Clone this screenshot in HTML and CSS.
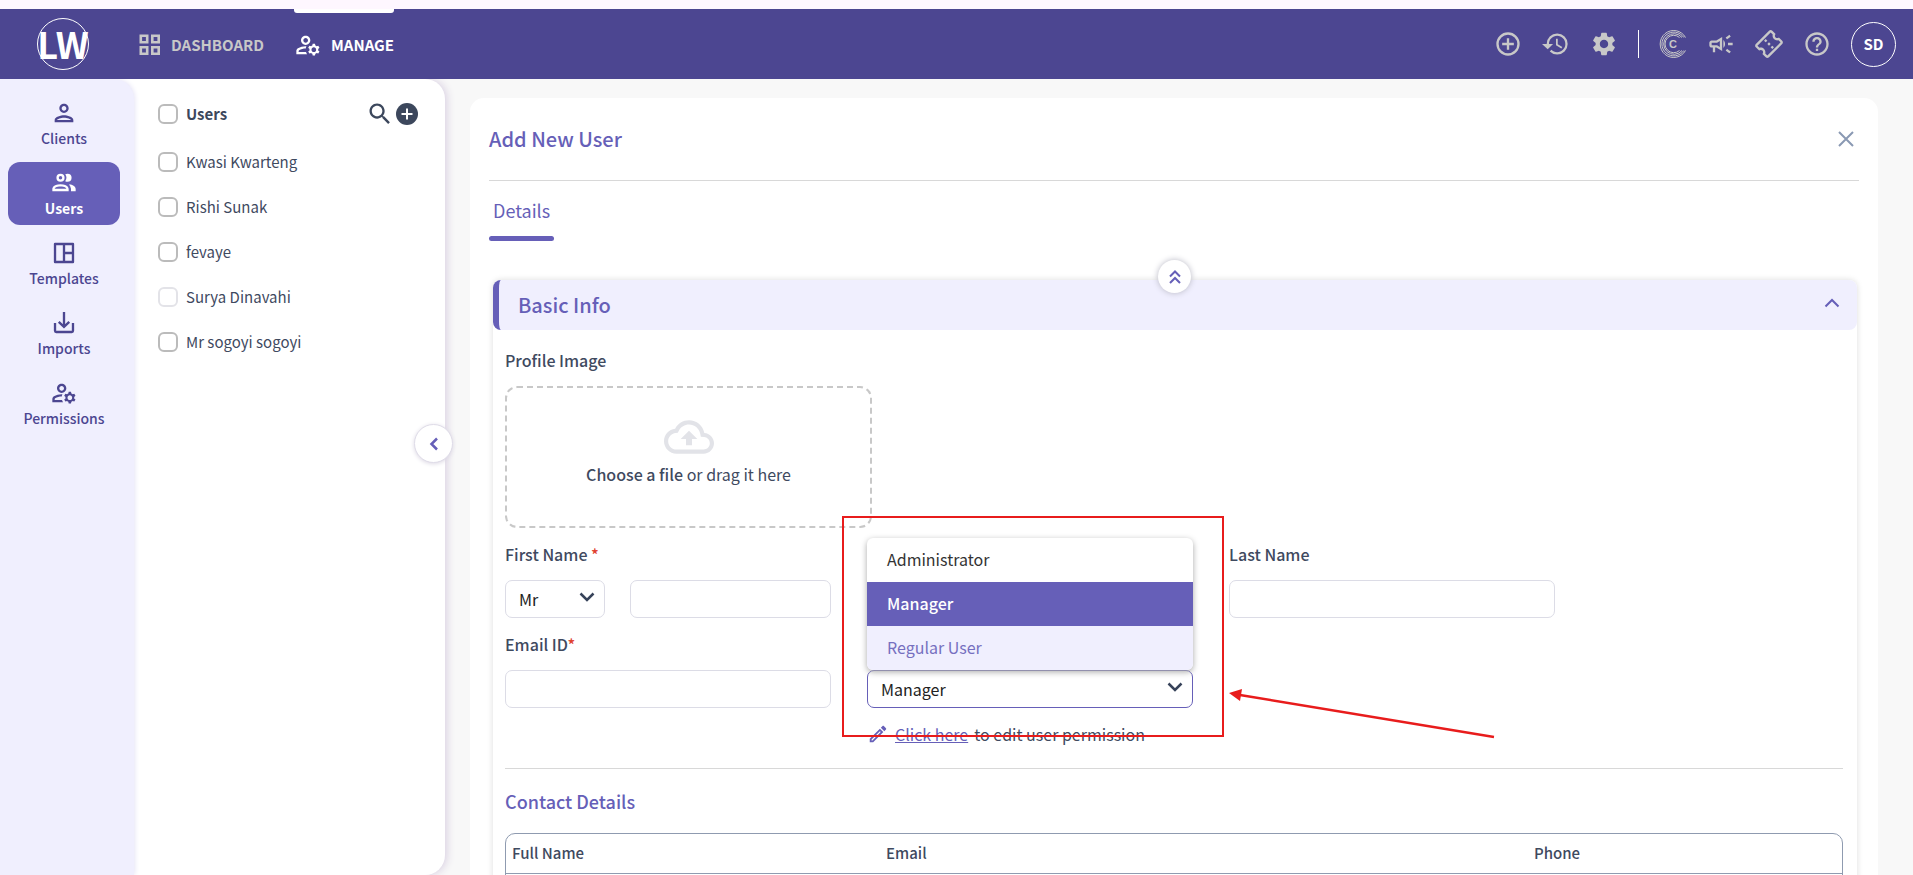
FILE: index.html
```html
<!DOCTYPE html>
<html lang="en">

<head>
  <meta charset="UTF-8">
  <meta name="viewport" content="width=device-width, initial-scale=1.0">
  <title>Add New User</title>
  <link rel="stylesheet" href="styles.css">
</head>

<body>
  <header class="topbar">
    <a class="logo" href="#">LW</a>
    <nav class="main-nav">
      <a href="#">
        <svg class="ico-24" viewBox="0 0 24 24" fill="none" stroke="currentColor" stroke-width="2.6"><path d="M2.8 2.8h6.4v6.4H2.8zM14.3 2.8h6.4v6.4h-6.4zM2.8 14.3h6.4v6.4H2.8zM14.3 14.3h6.4v6.4h-6.4z"/></svg>
        DASHBOARD
      </a>
      <a href="#" class="active">
        <svg class="ico-28" viewBox="0 0 24 24"><use href="#i-manage"/></svg>
        MANAGE
      </a>
    </nav>
    <div class="tools">
      <button type="button" aria-label="Add"><svg class="ico-28" viewBox="0 0 24 24" fill="none" stroke="currentColor" stroke-width="2"><circle cx="12" cy="12" r="9"/><path d="M12 7v10M7 12h10"/></svg></button>
      <button type="button" aria-label="History"><svg class="ico-28" viewBox="0 0 24 24"><path d="M13 3a9 9 0 0 0-9 9H0l4.9 4.4L9.5 12H6c0-3.87 3.13-7 7-7s7 3.13 7 7-3.13 7-7 7c-1.93 0-3.68-.79-4.94-2.06l-1.42 1.42A8.95 8.95 0 0 0 13 21a9 9 0 0 0 0-18zm-1 4.500v5.500l4.600 2.800.8-1.300-3.900-2.300V7.500H12z"/></svg></button>
      <button type="button" aria-label="Settings"><svg class="ico-28" viewBox="0 0 24 24"><path d="M19.140 12.940c.04-.3.06-.61.06-.94 0-.32-.02-.64-.07-.94l2.030-1.580c.18-.14.23-.41.12-.61l-1.920-3.320c-.12-.22-.37-.29-.59-.22l-2.390.96c-.5-.38-1.030-.7-1.620-.94L14.400 2.810c-.04-.24-.24-.41-.48-.41h-3.840c-.24 0-.43.17-.47.41L9.250 5.350c-.59.24-1.130.57-1.620.94L5.240 5.330c-.22-.08-.47 0-.59.22L2.740 8.870c-.12.21-.08.47.12.61l2.030 1.580c-.05.3-.09.63-.09.94s.02.64.07.94l-2.030 1.580c-.18.14-.23.41-.12.61l1.920 3.320c.12.22.37.29.59.22l2.390-.96c.5.38 1.030.7 1.620.94l.36 2.540c.05.24.24.41.48.41h3.840c.24 0 .44-.17.47-.41l.36-2.540c.59-.24 1.130-.56 1.620-.94l2.390.96c.22.08.47 0 .59-.22l1.920-3.320c.12-.22.07-.47-.12-.61l-2.010-1.580zM12 15.600c-1.980 0-3.600-1.620-3.600-3.600s1.620-3.600 3.600-3.600 3.600 1.620 3.600 3.600-1.620 3.600-3.600 3.600z"/></svg></button>
      <span class="divider"></span>
      <button type="button" aria-label="Credits">
        <svg class="ico-28" viewBox="0 0 28 28" fill="none" stroke="currentColor" stroke-width="1">
          <path d="M26.500 7.500A13.500 13.500 0 1 0 26.500 20.500"/><path d="M24.800 7.500A11.900 11.900 0 1 0 24.800 20.500"/><path d="M23 7.500A10.300 10.300 0 1 0 23 20.500"/><path d="M20.500 7.500A8.700 8.700 0 1 0 20.500 20.500"/>
          <text x="14" y="18" text-anchor="middle">C</text>
        </svg>
      </button>
      <button type="button" aria-label="Announcements"><svg class="ico-28" viewBox="0 0 24 24"><path d="M18 11v2h4v-2h-4zM16 17.610c.96.71 2.210 1.650 3.200 2.390.4-.53.8-1.070 1.200-1.600-.99-.74-2.240-1.680-3.200-2.400-.4.54-.8 1.080-1.200 1.610zM20.400 5.600c-.4-.53-.8-1.070-1.200-1.600-.99.74-2.240 1.680-3.200 2.400.4.53.8 1.070 1.200 1.600.96-.72 2.210-1.650 3.200-2.400zM4 9c-1.100 0-2 .9-2 2v2c0 1.100.9 2 2 2h1v4h2v-4h1l5 3V6L8 9H4zm5.030 1.710L11 9.530v4.940l-1.970-1.180-.48-.29H4v-2h4.550l.48-.29zM15.500 12c0-1.330-.58-2.530-1.500-3.350v6.690c.92-.81 1.500-2.010 1.500-3.340z"/></svg></button>
      <button type="button" aria-label="Tickets"><svg class="ico-28" viewBox="0 0 24 24" overflow="visible"><path transform="rotate(-45 12 12)" d="M22 10V6c0-1.110-.9-2-2-2H4c-1.100 0-1.990.89-1.990 2v4c1.100 0 1.990.9 1.990 2s-.89 2-2 2v4c0 1.100.9 2 2 2h16c1.100 0 2-.9 2-2v-4c-1.100 0-2-.9-2-2s.9-2 2-2zm-2-1.460c-1.190.69-2 1.990-2 3.460s.81 2.770 2 3.460V18H4v-2.540c1.190-.69 2-1.990 2-3.460 0-1.480-.8-2.770-1.990-3.460L4 6h16v2.540zM11 15h2v2h-2zm0-4h2v2h-2zm0-4h2v2h-2z"/></svg></button>
      <button type="button" aria-label="Help"><svg class="ico-28" viewBox="0 0 24 24"><path d="M11 18h2v-2h-2v2zm1-16C6.480 2 2 6.480 2 12s4.480 10 10 10 10-4.480 10-10S17.520 2 12 2zm0 18c-4.410 0-8-3.590-8-8s3.590-8 8-8 8 3.590 8 8-3.590 8-8 8zm0-14c-2.210 0-4 1.790-4 4h2c0-1.100.9-2 2-2s2 .9 2 2c0 2-3 1.750-3 5h2c0-2.250 3-2.500 3-5 0-2.210-1.790-4-4-4z"/></svg></button>
      <button type="button" class="avatar">SD</button>
    </div>
  </header>

  <div class="layout">
    <nav class="sidebar">
      <a href="#">
        <svg class="ico-28" viewBox="0 0 24 24"><path d="M12 6c1.100 0 2 .9 2 2s-.9 2-2 2-2-.9-2-2 .9-2 2-2m0 10c2.700 0 5.800 1.290 6 2H6c.23-.72 3.310-2 6-2m0-12C9.790 4 8 5.790 8 8s1.790 4 4 4 4-1.790 4-4-1.790-4-4-4zm0 10c-2.670 0-8 1.340-8 4v2h16v-2c0-2.660-5.330-4-8-4z"/></svg>
        Clients
      </a>
      <a href="#" class="active">
        <svg class="ico-28" viewBox="0 0 24 24"><path d="M13.070 10.410A5 5 0 0 0 13.070 4.590A3.390 3.390 0 0 1 15 4A3.500 3.500 0 0 1 15 11A3.390 3.390 0 0 1 13.070 10.410M5.500 7.500A3.500 3.500 0 1 1 9 11A3.500 3.500 0 0 1 5.500 7.500M7.500 7.500A1.500 1.500 0 1 0 9 6A1.500 1.500 0 0 0 7.500 7.500M16 17V19H2V17S2 13 9 13 16 17 16 17M14 17C13.860 16.220 12.670 15 9 15S4.070 16.310 4 17M15.950 13A5.320 5.320 0 0 1 18 17V19H22V17S22 13.370 15.940 13Z"/></svg>
        Users
      </a>
      <a href="#">
        <svg class="ico-28" viewBox="0 0 24 24" fill="none" stroke="currentColor" stroke-width="2" stroke-linejoin="round"><path d="M4.300 4.300h15.400v15.400H4.300zM12 4.300v15.400M12 12h7.700"/></svg>
        Templates
      </a>
      <a href="#">
        <svg class="ico-28" viewBox="0 0 24 24" fill="none" stroke="currentColor" stroke-width="2"><path d="M4.300 12v6.700q0 1 1 1h13.400q1 0 1-1V12M12 2.500v12M7.500 11l4.500 4.300 4.500-4.300"/></svg>
        Imports
      </a>
      <a href="#">
        <svg class="ico-28" viewBox="0 0 24 24">
          <path id="i-manage" d="M4 18v-.65c0-.34.16-.66.41-.81C6.100 15.530 8.030 15 10 15c.03 0 .05 0 .08.01.1-.7.3-1.370.59-1.980-.22-.02-.44-.03-.67-.03-2.420 0-4.680.67-6.610 1.820-.88.52-1.390 1.500-1.390 2.530V20h9.260c-.42-.6-.75-1.280-.97-2H4zm6-6c2.210 0 4-1.790 4-4s-1.790-4-4-4C7.790 4 6 5.790 6 8s1.790 4 4 4zm0-6c1.100 0 2 .9 2 2s-.9 2-2 2-2-.9-2-2 .9-2 2-2zm10.750 10c0-.22-.03-.42-.06-.63l1.140-1.010-1-1.730-1.450.49c-.32-.27-.68-.48-1.080-.63L18 11h-2l-.3 1.490c-.4.15-.76.36-1.080.63l-1.450-.49-1 1.730 1.140 1.010c-.03.21-.06.41-.06.63s.03.42.06.63l-1.140 1.010 1 1.730 1.450-.49c.32.27.68.48 1.080.63L16 21h2l.3-1.490c.4-.15.76-.36 1.080-.63l1.450.49 1-1.730-1.140-1.010c.03-.21.06-.41.06-.63zM17 18c-1.100 0-2-.9-2-2s.9-2 2-2 2 .9 2 2-.9 2-2 2z"/>
        </svg>
        Permissions
      </a>
    </nav>

    <aside class="users">
      <div class="users-head">
        <label class="check"><input type="checkbox">Users</label>
        <button type="button" aria-label="Search"><svg class="ico-28" viewBox="0 0 24 24"><path d="M15.500 14h-.79l-.28-.27C15.410 12.590 16 11.110 16 9.500 16 5.910 13.090 3 9.500 3S3 5.910 3 9.500 5.910 16 9.500 16c1.610 0 3.090-.59 4.230-1.570l.27.28v.79l5 4.990L20.490 19l-4.990-5zm-6 0C7.010 14 5 11.990 5 9.500S7.010 5 9.500 5 14 7.010 14 9.500 11.990 14 9.500 14z"/></svg></button>
        <button type="button" aria-label="Add user"><svg class="ico-22" viewBox="0 0 22 22"><circle cx="11" cy="11" r="11"/><path d="M11 5.500v11M5.500 11h11" stroke="#fff" stroke-width="2"/></svg></button>
      </div>
      <label class="check"><input type="checkbox">Kwasi Kwarteng</label>
      <label class="check"><input type="checkbox">Rishi Sunak</label>
      <label class="check"><input type="checkbox">fevaye</label>
      <label class="check"><input type="checkbox" disabled>Surya Dinavahi</label>
      <label class="check"><input type="checkbox">Mr sogoyi sogoyi</label>
      <button type="button" class="collapse" aria-label="Collapse panel"><svg width="10" height="14" viewBox="0 0 10 14" fill="none" stroke="currentColor" stroke-width="2.500"><path d="M8 1.500 2.500 7 8 12.500"/></svg></button>
    </aside>

    <main class="card">
      <div class="card-head">
        <h1>Add New User</h1>
        <button type="button" aria-label="Close"><svg width="16" height="16" viewBox="0 0 16 16" fill="none" stroke="currentColor" stroke-width="2"><path d="M1 1l14 14M15 1 1 15"/></svg></button>
      </div>
      <div class="tabs"><a href="#" class="tab">Details</a></div>

      <section class="panel">
        <button type="button" class="collapse-all" aria-label="Collapse all"><svg width="12" height="14" viewBox="0 0 12 14" fill="none" stroke="currentColor" stroke-width="2"><path d="M1 6.500 6 1.500l5 5M1 13 6 8l5 5"/></svg></button>
        <div class="panel-head">
          <h2>Basic Info</h2>
          <button type="button" aria-label="Collapse section"><svg width="16" height="14" viewBox="0 0 16 14" fill="none" stroke="currentColor" stroke-width="2"><path d="M1.500 8.500 8 2l6.500 6.500"/></svg></button>
        </div>

        <form class="panel-body">
          <label class="label" for="photo">Profile Image</label>
          <label class="dropzone">
            <input type="file" id="photo">
            <svg width="50" height="38" viewBox="0 3 24 18"><path d="M19.350 10.040C18.670 6.590 15.640 4 12 4 9.110 4 6.600 5.640 5.350 8.040 2.340 8.360 0 10.910 0 14c0 3.310 2.690 6 6 6h13c2.760 0 5-2.240 5-5 0-2.640-2.050-4.780-4.650-4.960zM19 18H6c-2.210 0-4-1.790-4-4 0-2.050 1.530-3.760 3.560-3.970l1.070-.11.5-.95C8.080 7.140 9.940 6 12 6c2.620 0 4.880 1.860 5.390 4.430l.3 1.500 1.530.11c1.560.1 2.780 1.410 2.780 2.960 0 1.650-1.350 3-3 3zM8 13h2.550v3h2.900v-3H16l-4-4z"/></svg>
            <span><b>Choose a file</b> or drag it here</span>
          </label>

          <div class="fields">
            <div class="field">
              <label class="label" for="first">First Name <i>*</i></label>
              <div class="name-row">
                <div class="select title-select">
                  <select aria-label="Title"><option>Mr</option><option>Mrs</option></select>
                  <svg viewBox="0 0 16 10"><path d="M1.500 1.500 8 8l6.500-6.500"/></svg>
                </div>
                <input type="text" id="first">
              </div>
            </div>
            <div class="field last-name">
              <label class="label" for="last">Last Name</label>
              <input type="text" id="last">
            </div>
            <div class="field">
              <label class="label" for="email">Email ID<i>*</i></label>
              <input type="email" id="email">
            </div>
            <div class="field role">
              <div class="select focused">
                <select aria-label="Role"><option>Administrator</option><option selected>Manager</option><option>Regular User</option></select>
                <svg viewBox="0 0 16 10"><path d="M1.500 1.500 8 8l6.500-6.500"/></svg>
                <ul class="menu" role="listbox" aria-label="Role">
                  <li role="option">Administrator</li>
                  <li role="option" aria-selected="true" class="selected">Manager</li>
                  <li role="option" class="hover">Regular User</li>
                </ul>
              </div>
              <p class="hint">
                <svg width="22" height="22" viewBox="0 0 24 24"><path d="M14.060 9.020l.92.92L5.920 19H5v-.92l9.060-9.060M17.660 3c-.25 0-.51.1-.7.29l-1.830 1.830 3.750 3.750 1.830-1.830c.39-.39.39-1.020 0-1.410l-2.340-2.340c-.2-.2-.45-.29-.71-.29zm-3.600 3.190L3 17.250V21h3.750L17.810 9.940l-3.750-3.750z"/></svg>
                <a href="#">Click here</a> to edit user permission
              </p>
              <div class="mark"></div>
              <svg class="arrow" width="270" height="52" viewBox="0 0 270 52"><path d="M11 6 265 48" stroke="#e81c1c" stroke-width="2.400"/><path d="M0 4 13 0 11 12z" fill="#e81c1c"/></svg>
            </div>
          </div>

          <h3>Contact Details</h3>
          <table class="contacts">
            <thead>
              <tr><th class="col-name">Full Name</th><th>Email</th><th class="col-phone">Phone</th></tr>
            </thead>
            <tbody>
              <tr><td></td><td></td><td></td></tr>
            </tbody>
          </table>
        </form>
      </section>
    </main>
  </div>
</body>

</html>
```
FILE: styles.css
```css
* {
  box-sizing: border-box;
  margin: 0;
  padding: 0;
}

body {
  height: 100vh;
  display: flex;
  flex-direction: column;
  overflow: hidden;
  background: #f8f8f8;
  color: #3f4a5f;
  font: 16px/24px "Noto Sans CJK SC", "Open Sans", sans-serif;
}

a {
  color: inherit;
  text-decoration: none;
}

button {
  display: flex;
  align-items: center;
  justify-content: center;
  border: 0;
  background: none;
  color: inherit;
  font: inherit;
  cursor: pointer;
}

svg {
  display: block;
  flex: none;
  fill: currentColor;
}

svg[fill="none"] {
  fill: none;
}

.ico-22 {
  width: 22px;
  height: 22px;
}

.ico-24 {
  width: 24px;
  height: 24px;
}

.ico-28 {
  width: 28px;
  height: 28px;
}

/* top bar */
.topbar {
  flex: none;
  display: flex;
  align-items: center;
  height: 79px;
  padding: 0 17px 0 37px;
  border-top: 9px solid #fef7ff;
  background: #4c4691;
  color: #c8c8c8;
}

.logo {
  display: flex;
  justify-content: center;
  width: 52px;
  height: 52px;
  border: 1px solid #fff;
  border-radius: 50%;
  color: #fff;
  font: bold 36px/48px "Liberation Sans Narrow", "Noto Sans CJK SC", sans-serif;
}

.main-nav {
  display: flex;
  align-self: stretch;
  gap: 30px;
  margin-left: 49px;
}

.main-nav a {
  position: relative;
  display: flex;
  align-items: center;
  gap: 9px;
  padding-top: 2px;
  font-size: 15px;
  font-weight: 700;
}

.main-nav .active {
  color: #fff;
}

.main-nav .active::before {
  content: "";
  position: absolute;
  top: 0;
  right: 0;
  left: 0;
  height: 4px;
  border-radius: 0 0 3px 3px;
  background: #fff;
}

.tools {
  display: flex;
  align-items: center;
  gap: 20px;
  margin-left: auto;
}

.tools text {
  fill: currentColor;
  stroke: none;
  font: bold 11px "Liberation Sans", Arial, sans-serif;
}

.divider {
  width: 1px;
  height: 28px;
  background: #fff;
}

.avatar {
  width: 45px;
  height: 45px;
  border: 1px solid #fff;
  border-radius: 50%;
  color: #fff;
  font-size: 15px;
  font-weight: 700;
}

/* left side */
.layout {
  flex: 1;
  display: flex;
  min-height: 0;
  overflow: hidden;
}

.sidebar {
  position: relative;
  z-index: 2;
  flex: none;
  display: flex;
  flex-direction: column;
  gap: 7px;
  width: 134px;
  padding: 13px 14px 0 8px;
  border-radius: 0 20px 0 0;
  background: #f0effe;
  box-shadow: 1px 0 5px #e6e4f6;
  color: #4c4691;
  font-size: 14px;
  font-weight: 500;
  line-height: 22px;
}

.sidebar a {
  display: flex;
  flex-direction: column;
  align-items: center;
  height: 63px;
  padding-top: 7px;
  border-radius: 12px;
}

.sidebar .active {
  background: #665fb8;
  color: #fff;
  font-weight: 700;
}

.users {
  position: relative;
  flex: none;
  width: 331px;
  margin-left: -20px;
  padding: 12px 27px 0 44px;
  border-radius: 0 20px 20px 0;
  background: #fff;
  box-shadow: 2px 0 8px #d9d0e2;
}

.users-head {
  display: flex;
  align-items: center;
  gap: 2px;
  height: 45px;
  margin-bottom: 3px;
  color: #3c475c;
}

.users-head .check {
  margin-right: auto;
  font-weight: 700;
}

.check {
  display: flex;
  align-items: center;
  gap: 8px;
  height: 45px;
  font-size: 15px;
}

.check input {
  appearance: none;
  width: 20px;
  height: 20px;
  border: 2px solid #bbb;
  border-radius: 6px;
  background: #fff;
}

.check input:disabled {
  border-color: #e3e3e8;
}

.collapse {
  position: absolute;
  top: 345px;
  right: -8px;
  width: 39px;
  height: 39px;
  border: 1px solid #dfdce8;
  border-radius: 50%;
  background: #fff;
  box-shadow: 0 1px 4px #dcd8e4;
  color: #665fb8;
}

/* card */
.card {
  flex: 1;
  min-width: 0;
  margin: 19px 35px 0 25px;
  padding: 0 19px;
  overflow: hidden;
  border-radius: 14px 14px 0 0;
  background: #fff;
}

.card-head {
  display: flex;
  align-items: center;
  justify-content: space-between;
  height: 83px;
  padding-right: 5px;
  border-bottom: 1px solid #d8d8d8;
  color: #8a99b3;
}

h1,
h2,
h3 {
  color: #665fb8;
  font-size: 20px;
  font-weight: 500;
}

.tabs {
  display: flex;
}

.tab {
  padding: 17px 4px 0;
  color: #665fb8;
  font-size: 18px;
}

.tab::after {
  content: "";
  display: block;
  height: 5px;
  margin: 14px -4px 0;
  border-radius: 3px;
  background: #665fb8;
}

.panel {
  position: relative;
  margin: 39px 2px 0 4px;
  border-radius: 8px 8px 0 0;
  box-shadow: 0 0 6px #dcdcdc;
}

.panel-head {
  display: flex;
  align-items: center;
  justify-content: space-between;
  height: 50px;
  padding: 0 17px 0 19px;
  border-left: 6px solid #665fb8;
  border-radius: 8px;
  background: #f0effe;
  color: #665fb8;
}

.collapse-all {
  position: absolute;
  top: -20px;
  left: 50%;
  width: 33px;
  height: 33px;
  margin-left: -17px;
  border-radius: 50%;
  background: #fff;
  box-shadow: 0 0 6px #b8b8c4;
  color: #665fb8;
}

.panel-body {
  padding: 18px 14px 40px 12px;
}

.label {
  display: block;
  font-weight: 500;
}

.label i {
  color: #e0402f;
  font-style: normal;
}

.dropzone {
  display: flex;
  flex-direction: column;
  align-items: center;
  gap: 6px;
  width: 367px;
  height: 142px;
  margin-top: 14px;
  padding-top: 30px;
  border: 2px dashed #c8c8c8;
  border-radius: 12px;
}

.dropzone input {
  display: none;
}

.dropzone svg {
  color: #e2e3e8;
}

.dropzone b {
  font-weight: 500;
}

.fields {
  display: grid;
  grid-template-columns: repeat(3, minmax(0, 326px));
  column-gap: 36px;
  row-gap: 14px;
  padding: 14px 0 22px;
  border-bottom: 1px solid #d8d8d8;
}

.last-name {
  grid-column: 3;
}

.field .label {
  margin-bottom: 14px;
}

.field input,
.select select {
  display: block;
  width: 100%;
  height: 38px;
  padding: 0 13px;
  border: 1px solid #dcdce6;
  border-radius: 7px;
  outline: 0;
  background: #fff;
  color: #222;
  font: inherit;
}

.select select {
  appearance: none;
}

.name-row {
  display: flex;
  gap: 25px;
}

.title-select {
  flex: none;
  width: 100px;
}

.select {
  position: relative;
}

.select > svg {
  position: absolute;
  top: 12px;
  right: 10px;
  width: 16px;
  height: 10px;
  fill: none;
  stroke: #37435a;
  stroke-width: 2.5;
}

.focused select {
  border-color: #665fb8;
}

/* the open menu takes the place of the label */
.role {
  position: relative;
  padding-top: 38px;
}

.menu {
  position: absolute;
  right: 0;
  bottom: 38px;
  left: 0;
  overflow: hidden;
  border-radius: 6px;
  background: #fff;
  box-shadow: 0 2px 6px #a8a8a8;
  color: #333;
  list-style: none;
}

.menu li {
  height: 44px;
  padding: 0 20px;
  line-height: 42px;
}

.menu .selected {
  background: #665fb8;
  color: #fff;
  font-weight: 500;
}

.menu .hover {
  background: #f0effe;
  color: #766fc0;
}

.hint {
  display: flex;
  align-items: center;
  gap: 6px;
  margin-top: 14px;
}

.hint svg,
.hint a {
  color: #665fb8;
}

.hint a {
  text-decoration: underline;
}

/* callout drawn over the role field */
.mark {
  position: absolute;
  top: -116px;
  left: -25px;
  width: 382px;
  height: 221px;
  border: 2px solid #e81c1c;
}

.arrow {
  position: absolute;
  top: 57px;
  left: 362px;
}

h3 {
  margin: 20px 0;
  font-size: 18px;
}

.contacts {
  width: 100%;
  border: 1px solid #8f9bb0;
  border-radius: 10px;
  border-spacing: 0;
  font-size: 15px;
}

.contacts th {
  height: 40px;
  padding: 0 6px 2px;
  border-bottom: 1px solid #8f9bb0;
  font-weight: 500;
  text-align: left;
}

.contacts td {
  height: 40px;
}

.col-name {
  width: 28%;
}

.col-phone {
  width: 314px;
}
```
